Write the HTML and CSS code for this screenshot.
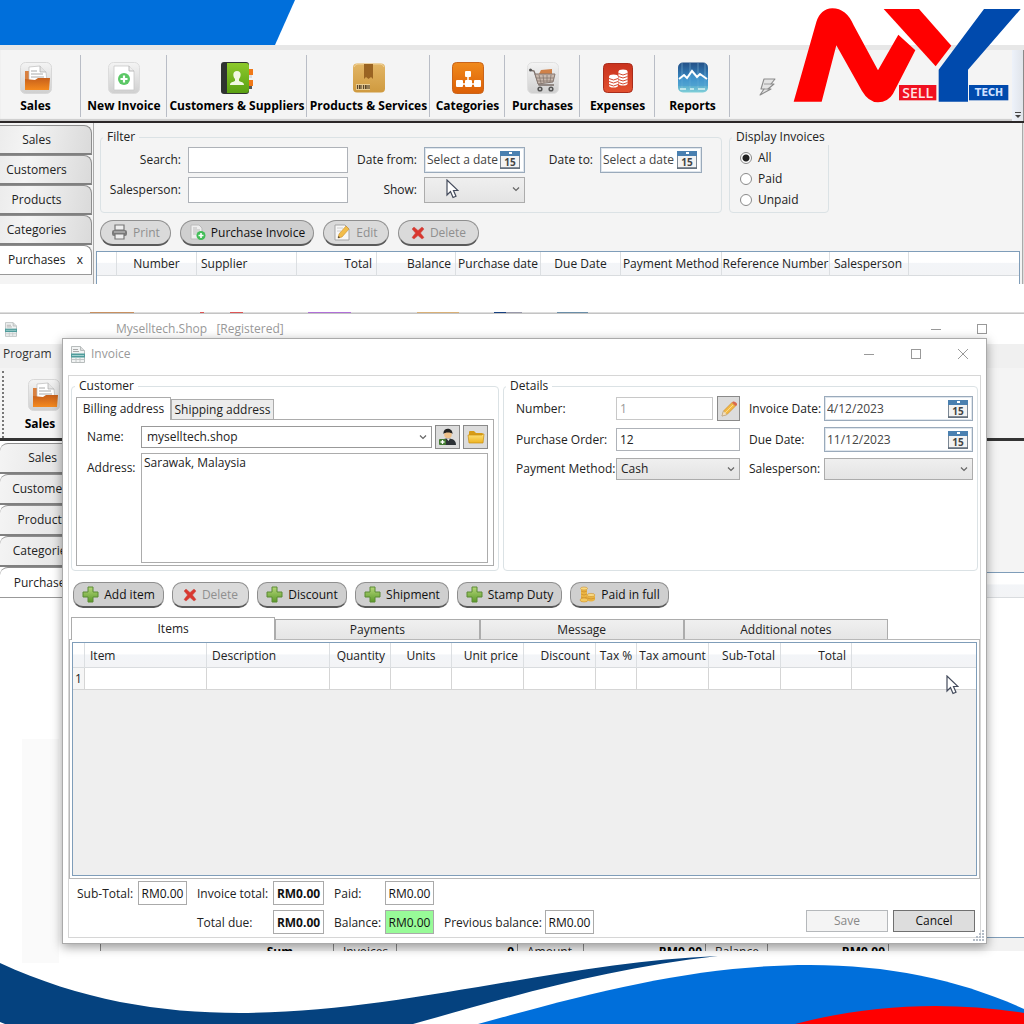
FILE: index.html
```html
<!DOCTYPE html>
<html lang="en">
<head>
<meta charset="utf-8">
<meta name="viewport" content="width=device-width, initial-scale=1">
<title>Myselltech.Shop</title>
<link rel="stylesheet" href="styles.css">
</head>
<body>
<svg class="defs" aria-hidden="true">
  <defs>
    <linearGradient id="gOrange" x1="0" y1="0" x2="0" y2="1"><stop offset="0" stop-color="#c65f1c"/><stop offset="1" stop-color="#f58a1e"/></linearGradient>
    <linearGradient id="gTile" x1="0" y1="0" x2="0" y2="1"><stop offset="0" stop-color="#f4f4f4"/><stop offset="1" stop-color="#cfcfcf"/></linearGradient>
    <linearGradient id="gGreen" x1="0" y1="0" x2="0" y2="1"><stop offset="0" stop-color="#8cc92b"/><stop offset="1" stop-color="#5aa012"/></linearGradient>
    <linearGradient id="gBox" x1="0" y1="0" x2="0" y2="1"><stop offset="0" stop-color="#e2b565"/><stop offset="1" stop-color="#cf9a3f"/></linearGradient>
    <linearGradient id="gCat" x1="0" y1="0" x2="0" y2="1"><stop offset="0" stop-color="#f08a1c"/><stop offset="1" stop-color="#dc5f06"/></linearGradient>
    <linearGradient id="gRed" x1="0" y1="0" x2="0" y2="1"><stop offset="0" stop-color="#c9321d"/><stop offset="1" stop-color="#e2502f"/></linearGradient>
    <linearGradient id="gBlue" x1="0" y1="0" x2="0" y2="1"><stop offset="0" stop-color="#235087"/><stop offset=".55" stop-color="#3689c4"/><stop offset="1" stop-color="#7fd0d8"/></linearGradient>
    <linearGradient id="gPlus" x1="0" y1="0" x2="0" y2="1"><stop offset="0" stop-color="#b5d77a"/><stop offset="1" stop-color="#5c9a2a"/></linearGradient>
    <linearGradient id="gFolder" x1="0" y1="0" x2="0" y2="1"><stop offset="0" stop-color="#ffe27a"/><stop offset="1" stop-color="#eeb422"/></linearGradient>
  </defs>
  <symbol id="i-sales" viewBox="0 0 32 32">
    <rect x=".5" y=".5" width="31" height="31" rx="5" fill="url(#gTile)" stroke="#d8d8d8"/>
    <path d="M5 9h5v14H5z" fill="#d9803f"/>
    <path d="M9 5l11-1 6 6 1 10H9z" fill="#fff" stroke="#bbb" stroke-width=".7"/>
    <path d="M20 4v6h6" fill="#e5e5e5" stroke="#aaa" stroke-width=".7"/>
    <path d="M11 9h6M11 12h12M11 15h13" stroke="#aaa" stroke-width="1"/>
    <path d="M5 17l10 1 3-2 12 0-1 12H5z" fill="url(#gOrange)"/>
  </symbol>
  <symbol id="i-new" viewBox="0 0 32 32">
    <rect x=".5" y=".5" width="31" height="31" rx="5" fill="url(#gTile)" stroke="#dcdcdc"/>
    <path d="M6 4h15l5 5v19H6z" fill="#fff" stroke="#c8c8c8" stroke-width=".8"/>
    <path d="M21 4v5h5" fill="#eee" stroke="#aaa" stroke-width=".8"/>
    <circle cx="16" cy="17" r="6" fill="#5cc866"/>
    <path d="M16 13.500v7M12.500 17h7" stroke="#fff" stroke-width="2.200"/>
  </symbol>
  <symbol id="i-book" viewBox="0 0 32 32">
    <rect x="24" y="7" width="8" height="6" fill="#f07818"/><rect x="24" y="18" width="8" height="6" fill="#f07818"/>
    <rect x="24" y="13" width="7" height="3" fill="#ddd"/><rect x="24" y="24" width="7" height="3" fill="#555"/>
    <rect x="0" y="0" width="28" height="32" rx="3" fill="#2f3330"/>
    <path d="M6 1h19q3 0 3 3v24q0 3-3 3H6z" fill="url(#gGreen)"/>
    <path d="M16 9c5 0 4 6 2 8v2c2 1 5 1 5 4H9c0-3 3-3 5-4v-2c-2-2-3-8 2-8z" fill="#f1f8e2"/>
  </symbol>
  <symbol id="i-box" viewBox="0 0 32 32">
    <rect x="0" y="1.500" width="32" height="29" rx="4" fill="url(#gBox)"/>
    <path d="M1 5q1-3 4-3h22q3 0 4 3" fill="none" stroke="#f0d39a"/>
    <path d="M11 2h9v15l-2-2-2.500 2-2.500-2-2 2z" fill="#9a6423"/>
    <rect x="3" y="22" width="14" height="6" fill="#e9cd93"/>
    <path d="M4.500 23v4M6.500 23v4M8 23v4M10.500 23v4M12.500 23v4M14 23v4M16 23v4" stroke="#59452a" stroke-width="1.200"/>
  </symbol>
  <symbol id="i-cat" viewBox="0 0 32 32">
    <rect x=".5" y=".5" width="31" height="31" rx="4" fill="url(#gCat)" stroke="#c9641a"/>
    <path d="M16 13v9M8 22h16" stroke="#fff" stroke-width="1.500"/>
    <rect x="13" y="9" width="6" height="6" rx="1" fill="#fff"/><rect x="4" y="18" width="7" height="7" rx="1" fill="#fff"/>
    <rect x="13" y="18" width="7" height="7" rx="1" fill="#fff"/><rect x="22" y="18" width="7" height="7" rx="1" fill="#fff"/>
  </symbol>
  <symbol id="i-cart" viewBox="0 0 32 32">
    <rect x=".5" y=".5" width="31" height="31" rx="5" fill="url(#gTile)" stroke="#e0e0e0"/>
    <path d="M12 12l2-4 11-1v6z" fill="#d08148"/>
    <path d="M3 8l4 1 5 14h15" fill="none" stroke="#7b6f6a" stroke-width="1.300"/>
    <path d="M8 12h20l-2 8-15 2z" fill="#c9b9ae" stroke="#857770"/>
    <path d="M12 13l2 8M16 13l1 8M20 13v7M24 13l-1 7M9 16h18M10 19h16" stroke="#857770" stroke-width=".8"/>
    <circle cx="3.500" cy="8" r="1.500" fill="#555"/>
    <circle cx="13" cy="27" r="2.600" fill="#555"/><circle cx="24" cy="27" r="2.600" fill="#555"/>
    <circle cx="13" cy="27" r="1" fill="#ddd"/><circle cx="24" cy="27" r="1" fill="#ddd"/>
  </symbol>
  <symbol id="i-exp" viewBox="0 0 32 32">
    <rect x="1.500" y="1.500" width="29" height="29" rx="4" fill="url(#gRed)" stroke="#a92c1b"/>
    <g fill="#fff"><ellipse cx="21" cy="9.500" rx="4.500" ry="2"/><rect x="16.500" y="10" width="9" height="11"/><ellipse cx="21" cy="21.500" rx="4.500" ry="2"/>
    <ellipse cx="11.500" cy="14.500" rx="4.500" ry="2"/><rect x="7" y="15" width="9" height="8"/><ellipse cx="11.500" cy="23.500" rx="4.500" ry="2"/></g>
    <path d="M16.500 11.500q4.500 3 9 0M16.500 14.500q4.500 3 9 0M16.500 17.500q4.500 3 9 0M7 16.500q4.500 3 9 0M7 19.500q4.500 3 9 0M16.500 20.500q4.500 3 9 0M7 22.500q4.500 3 9 0" fill="none" stroke="#d5492f" stroke-width="1"/>
  </symbol>
  <symbol id="i-rep" viewBox="0 0 32 32">
    <rect x="1" y=".5" width="30" height="30" rx="5" fill="url(#gBlue)"/>
    <path d="M5 1v29M13 1v29M21 1v29M28 1v29" stroke="#8fc4df" stroke-width=".7" opacity=".7"/>
    <path d="M1 17l5-4 3 3 5-7 5 6 3-3 9 6v6H1z" fill="#4a9cd2" opacity=".6"/>
    <path d="M2 17l5-4 3 3 5-7 5 6 3-3 7 5" fill="none" stroke="#fff" stroke-width="2"/>
    <path d="M3 27h6M13 27h4M21 27h7" stroke="#d7f3f2" stroke-width="1.500"/>
  </symbol>
  <symbol id="i-bolt" viewBox="0 0 17 18">
    <path d="M5 1h11l-4 5h3L9 11h3L1 17l4-6H2z" fill="#e4e4e4" stroke="#8b8b8b" stroke-width="1.100" stroke-linejoin="round"/>
    <path d="M5 6h7M5 11h4" stroke="#8b8b8b" stroke-width=".8"/>
  </symbol>
  <symbol id="i-print" viewBox="0 0 17 17">
    <path d="M4 1h9v5H4z" fill="#eee" stroke="#777" stroke-width="1.200"/>
    <rect x="1" y="6" width="15" height="6" rx="2" fill="#7b7b7b"/>
    <path d="M4 10h9v5H4z" fill="#eee" stroke="#777" stroke-width="1.200"/><path d="M3 8h11" stroke="#ccc"/>
  </symbol>
  <symbol id="i-pinv" viewBox="0 0 17 17">
    <path d="M2 1h8l3 3v11H2z" fill="#eee" stroke="#bbb"/><path d="M4 4h4M4 6h7M4 8h6M4 10h4" stroke="#bbb"/>
    <circle cx="12" cy="11.500" r="4.500" fill="#41bd57"/><path d="M12 9v5M9.500 11.500h5" stroke="#fff" stroke-width="1.600"/>
  </symbol>
  <symbol id="i-edit" viewBox="0 0 17 17">
    <path d="M1 1h10l4 4v11H1z" fill="#f7f7f7" stroke="#a5a5a5"/><path d="M3 4h6M3 7h4" stroke="#ccc"/>
    <path d="M4 14l1-4 7-8 3 3-7 8z" fill="#f2bd4a" stroke="#c98e2c" stroke-width=".6"/><path d="M4 14l.5-2 1.500 1.500z" fill="#333"/>
  </symbol>
  <symbol id="i-x" viewBox="0 0 14 14">
    <path d="M1 3l2-2 4 3.500L11 1l2 2-3.500 4L13 11.500 11 13 7 9.500 3 13l-2-1.500L4.500 7z" fill="#d9372f" stroke="#c8504a" stroke-width=".5"/>
  </symbol>
  <symbol id="i-plus" viewBox="0 0 17 17">
    <path d="M6 1h5v5h5v5h-5v5H6v-5H1V6h5z" fill="url(#gPlus)" stroke="#5b8a35" stroke-linejoin="round"/>
  </symbol>
  <symbol id="i-coins" viewBox="0 0 17 17">
    <path d="M2 2v12q3 2 6 0V2z" fill="#eab544"/><path d="M8 9v5q4 3 8 0V9z" fill="#eab544"/>
    <ellipse cx="5" cy="2.500" rx="3.500" ry="1.500" fill="#f8d984" stroke="#cf922d" stroke-width=".6"/>
    <path d="M2 5q3 2 6 0M2 8q3 2 6 0M2 11q3 2 6 0M8 12q4 2 8 0" fill="none" stroke="#cf922d" stroke-width=".8"/>
    <ellipse cx="12" cy="9" rx="4" ry="1.600" fill="#f8d984" stroke="#cf922d" stroke-width=".6"/>
    <ellipse cx="5" cy="14" rx="4" ry="2" fill="#f3c860" stroke="#cf922d" stroke-width=".6"/>
  </symbol>
  <symbol id="i-cal" viewBox="0 0 20 18">
    <rect x=".5" y=".5" width="19" height="17" fill="#f3f3f3" stroke="#7b8794"/>
    <rect x="0" y="0" width="20" height="5" fill="#4a80b0"/><rect x="9" y="1" width="3" height="2" fill="#fff"/>
    <path d="M0 17h20" stroke="#5f6b78" stroke-width="1.500"/>
  </symbol>
  <symbol id="i-chev" viewBox="0 0 8 6"><path d="M1 1.500l3 3 3-3" fill="none" stroke="#666" stroke-width="1.200"/></symbol>
  <symbol id="i-doc" viewBox="0 0 14 17">
    <path d="M.5.5h9l4 4v12H.5z" fill="#f1f3f3" stroke="#b7bcbc"/><path d="M9.500.5v4h4" fill="#ddd" stroke="#b7bcbc"/>
    <path d="M2 3.500h5M2 5.500h6" stroke="#aaa"/><path d="M1 13.500h12M5 12v4M9 12v4" stroke="#c3c8c8"/>
    <path d="M0 7.500h14v4H0z" fill="#4f9c9b"/><path d="M1 9.500h12" stroke="#b9dcdb" stroke-width=".8"/>
  </symbol>
  <symbol id="i-person" viewBox="0 0 18 18">
    <path d="M2 17c0-5 2-6.500 7-6.500s8 2 8 6.500z" fill="#2d3236"/><path d="M7.500 10.500l2 2.500 1.500-2.500z" fill="#e8e8e8"/>
    <circle cx="9" cy="6.500" r="3.800" fill="#eec08a"/><path d="M4.500 6c-1-7 9.500-7 9 0-1-2-8-2-9 0z" fill="#222"/>
    <rect x="0" y="11" width="7" height="6" rx="1" fill="#417a30"/><path d="M3.500 12v4M1.500 14h4" stroke="#fff" stroke-width="1.300"/>
  </symbol>
  <symbol id="i-folder" viewBox="0 0 18 16">
    <path d="M2 3q0-1 1-1h4l2 2h6q1 0 1 1v8H2z" fill="#d79b16"/>
    <path d="M1 6h14l1-1h1l-1 9H2z" fill="url(#gFolder)" stroke="#c98f15" stroke-width=".7"/>
  </symbol>
  <symbol id="i-pencil" viewBox="0 0 16 16">
    <path d="M1 15l1.500-5L11 1.500 14.500 5 6 13.500z" fill="#f3b944" stroke="#cb8c2d" stroke-width=".7"/>
    <path d="M11 1.500l1-1q2-.5 3.500 1.500t0 2.500l-1 .5z" fill="#d9694c"/><path d="M1 15l1.500-5 3.500 3.500z" fill="#f7e1bd" stroke="#999" stroke-width=".4"/>
    <path d="M4 12l8-8" stroke="#fbdc8b"/>
  </symbol>
  <symbol id="i-cursor" viewBox="0 0 13 20">
    <path d="M1 1v15l3.500-3.500L7 18.500l3-1.300L7.500 11.500H12z" fill="#fff" stroke="#444b5c" stroke-width="1.200"/>
  </symbol>
</svg>

<header class="banner"><div class="banner-shape"></div></header>

<section class="purchases-window">
  <nav class="toolbar" aria-label="Main">
    <button class="tool w-81"><svg><use href="#i-sales"/></svg>Sales</button>
    <button class="tool w-86"><svg><use href="#i-new"/></svg>New Invoice</button>
    <button class="tool w-140"><svg><use href="#i-book"/></svg>Customers &amp; Suppliers</button>
    <button class="tool w-123"><svg><use href="#i-box"/></svg>Products &amp; Services</button>
    <button class="tool w-75"><svg><use href="#i-cat"/></svg>Categories</button>
    <button class="tool w-75"><svg><use href="#i-cart"/></svg>Purchases</button>
    <button class="tool w-75"><svg><use href="#i-exp"/></svg>Expenses</button>
    <button class="tool w-75"><svg><use href="#i-rep"/></svg>Reports</button>
    <button class="bolt" aria-label="Quick action"><svg><use href="#i-bolt"/></svg></button>
    <button class="overflow" aria-label="More"><svg viewBox="0 0 6 6"><path d="M0 .5h6" stroke="#444"/><path d="M0 3h6L3 6z" fill="#444"/></svg></button>
  </nav>
  <div class="window-body">
    <nav class="side-tabs" aria-label="Open lists">
      <button class="side-tab">Sales</button>
      <button class="side-tab">Customers</button>
      <button class="side-tab">Products</button>
      <button class="side-tab">Categories</button>
      <button class="side-tab current">Purchases <span>x</span></button>
    </nav>
    <main class="list-pane">
      <div class="filters">
        <fieldset class="group filter">
          <legend>Filter</legend>
          <div class="filter-grid">
            <label for="search">Search:</label><input id="search" class="field" type="text">
            <label for="from">Date from:</label>
            <div class="date"><input id="from" type="text" value="Select a date"><button aria-label="Pick date"><svg viewBox="0 0 20 18"><use href="#i-cal"/><text x="10" y="15" text-anchor="middle" class="cal-day">15</text></svg></button></div>
            <label for="to">Date to:</label>
            <div class="date"><input id="to" type="text" value="Select a date"><button aria-label="Pick date"><svg viewBox="0 0 20 18"><use href="#i-cal"/><text x="10" y="15" text-anchor="middle" class="cal-day">15</text></svg></button></div>
            <label for="person">Salesperson:</label><input id="person" class="field" type="text">
            <label for="show">Show:</label>
            <div class="combo"><select id="show"><option></option></select><svg><use href="#i-chev"/></svg></div>
          </div>
        </fieldset>
        <fieldset class="group display">
          <legend>Display Invoices</legend>
          <label><input type="radio" name="display" checked>All</label>
          <label><input type="radio" name="display">Paid</label>
          <label><input type="radio" name="display">Unpaid</label>
        </fieldset>
      </div>
      <div class="actions pills">
        <button class="pill w-71" disabled><svg><use href="#i-print"/></svg>Print</button>
        <button class="pill w-134"><svg><use href="#i-pinv"/></svg>Purchase Invoice</button>
        <button class="pill w-66" disabled><svg><use href="#i-edit"/></svg>Edit</button>
        <button class="pill w-81" disabled><svg class="x"><use href="#i-x"/></svg>Delete</button>
      </div>
      <div class="purchase-list">
        <table class="grid">
          <colgroup><col class="w-20"><col class="w-80"><col class="w-100"><col class="w-80"><col class="w-79"><col class="w-85"><col class="w-80"><col class="w-101"><col class="w-108"><col class="w-79"><col></colgroup>
          <thead><tr><th></th><th class="c">Number</th><th>Supplier</th><th class="r">Total</th><th class="r">Balance</th><th class="c">Purchase date</th><th class="c">Due Date</th><th class="c">Payment Method</th><th class="c">Reference Number</th><th>Salesperson</th><th></th></tr></thead>
        </table>
      </div>
      <svg class="cursor cursor-a" aria-hidden="true"><use href="#i-cursor"/></svg>
    </main>
  </div>
</section>

<section class="shop-window">
  <div class="color-strip"></div>
  <div class="shop-title">
    <svg class="doc"><use href="#i-doc"/></svg>
    <span class="blank"></span>
    <span class="shop-name">Myselltech.Shop &nbsp; [Registered]</span>
    <svg class="win-min" viewBox="0 0 12 12"><path d="M1 6.500h10" stroke="#999"/></svg>
    <svg class="win-max" viewBox="0 0 12 12"><rect x="1.500" y="1.500" width="9" height="9" fill="none" stroke="#999"/></svg>
  </div>
  <div class="shop-menu"><a href="#program">Program</a></div>
  <div class="shop-tools"><button class="tool"><svg><use href="#i-sales"/></svg>Sales</button></div>
  <div class="shop-body">
    <nav class="side-tabs behind" aria-label="Lists">
      <button class="side-tab">Sales</button>
      <button class="side-tab">Customers</button>
      <button class="side-tab">Products</button>
      <button class="side-tab">Categories</button>
      <button class="side-tab current">Purchases</button>
    </nav>
    <div class="shop-list">
      <div class="shop-filter"></div>
      <div class="shop-head"></div>
      <div class="shop-rows"></div>
      <div class="summary"><b class="s-sum">Sum</b><span>Invoices</span><b>0</b><span>Amount</span><b>RM0.00</b><span>Balance</span><b>RM0.00</b></div>
    </div>
  </div>
  <div class="fade"></div>

  <div class="dialog" role="dialog" aria-label="Invoice">
    <div class="dialog-title">
      <svg class="doc"><use href="#i-doc"/></svg><span>Invoice</span>
      <button aria-label="Minimize"><svg viewBox="0 0 12 12"><path d="M1 6.500h10" stroke="#999"/></svg></button>
      <button aria-label="Maximize"><svg viewBox="0 0 12 12"><rect x="1.500" y="1.500" width="9" height="9" fill="none" stroke="#999"/></svg></button>
      <button aria-label="Close"><svg viewBox="0 0 12 12"><path d="M1 1l10 10M11 1L1 11" stroke="#999"/></svg></button>
    </div>
    <form class="client">
      <div class="groups">
        <fieldset class="group customer">
          <legend>Customer</legend>
          <div class="address-tabs"><button type="button" class="on">Billing address</button><button type="button">Shipping address</button></div>
          <div class="address-panel">
            <label for="name">Name:</label>
            <div class="combo light"><select id="name"><option>myselltech.shop</option></select><svg><use href="#i-chev"/></svg></div>
            <button type="button" class="icon-btn" aria-label="Add customer"><svg><use href="#i-person"/></svg></button>
            <button type="button" class="icon-btn" aria-label="Open customer"><svg><use href="#i-folder"/></svg></button>
            <label for="address" class="addr-label">Address:</label>
            <textarea id="address">Sarawak, Malaysia</textarea>
          </div>
        </fieldset>
        <fieldset class="group details">
          <legend>Details</legend>
          <div class="details-grid">
            <label for="number">Number:</label>
            <div class="number"><input id="number" class="field" value="1" disabled><button type="button" class="icon-btn" aria-label="Edit number"><svg><use href="#i-pencil"/></svg></button></div>
            <label for="idate" class="second">Invoice Date:</label>
            <div class="date"><input id="idate" type="text" value="4/12/2023"><button type="button" aria-label="Pick date"><svg viewBox="0 0 20 18"><use href="#i-cal"/><text x="10" y="15" text-anchor="middle" class="cal-day">15</text></svg></button></div>
            <label for="po">Purchase Order:</label><input id="po" class="field" type="text" value="12">
            <label for="ddate" class="second">Due Date:</label>
            <div class="date"><input id="ddate" type="text" value="11/12/2023"><button type="button" aria-label="Pick date"><svg viewBox="0 0 20 18"><use href="#i-cal"/><text x="10" y="15" text-anchor="middle" class="cal-day">15</text></svg></button></div>
            <label for="pay">Payment Method:</label>
            <div class="combo"><select id="pay"><option>Cash</option></select><svg><use href="#i-chev"/></svg></div>
            <label for="sp" class="second">Salesperson:</label>
            <div class="combo"><select id="sp"><option></option></select><svg><use href="#i-chev"/></svg></div>
          </div>
        </fieldset>
      </div>
      <div class="item-actions pills">
        <button type="button" class="pill w-91"><svg><use href="#i-plus"/></svg>Add item</button>
        <button type="button" class="pill w-77" disabled><svg class="x"><use href="#i-x"/></svg>Delete</button>
        <button type="button" class="pill w-90"><svg><use href="#i-plus"/></svg>Discount</button>
        <button type="button" class="pill w-94"><svg><use href="#i-plus"/></svg>Shipment</button>
        <button type="button" class="pill w-105"><svg><use href="#i-plus"/></svg>Stamp Duty</button>
        <button type="button" class="pill w-99"><svg><use href="#i-coins"/></svg>Paid in full</button>
      </div>
      <div class="section-tabs"><button type="button" class="on">Items</button><button type="button">Payments</button><button type="button">Message</button><button type="button">Additional notes</button></div>
      <div class="section-panel">
        <div class="items">
          <table class="grid lines">
            <colgroup><col class="w-12"><col class="w-122"><col class="w-123"><col class="w-61"><col class="w-61"><col class="w-72"><col class="w-72"><col class="w-41"><col class="w-72"><col class="w-72"><col class="w-71"><col></colgroup>
            <thead><tr><th></th><th>Item</th><th>Description</th><th class="r">Quantity</th><th class="c">Units</th><th class="r">Unit price</th><th class="r">Discount</th><th class="c">Tax %</th><th class="c">Tax amount</th><th class="r">Sub-Total</th><th class="r">Total</th><th></th></tr></thead>
            <tbody><tr><td class="row-no">1</td><td></td><td></td><td></td><td></td><td></td><td></td><td></td><td></td><td></td><td></td><td></td></tr></tbody>
          </table>
        </div>
      </div>
      <div class="bottom">
        <div class="totals">
          <label for="t1">Sub-Total:</label><input id="t1" readonly value="RM0.00">
          <label for="t2">Invoice total:</label><input id="t2" class="strong" readonly value="RM0.00">
          <label for="t3">Paid:</label><input id="t3" readonly value="RM0.00">
          <label for="t4" class="due">Total due:</label><input id="t4" class="strong" readonly value="RM0.00">
          <label for="t5">Balance:</label><input id="t5" class="ok" readonly value="RM0.00">
          <label for="t6">Previous balance:</label><input id="t6" readonly value="RM0.00">
        </div>
        <div class="commands"><button type="button" disabled>Save</button><button type="button">Cancel</button></div>
      </div>
    </form>
    <svg class="grip" viewBox="0 0 12 12" aria-hidden="true"><g fill="#b4bcc6"><path d="M9 0h2v2H9zM9 3h2v2H9zM9 6h2v2H9zM9 9h2v2H9zM6 3h2v2H6zM6 6h2v2H6zM6 9h2v2H6zM3 6h2v2H3zM3 9h2v2H3zM0 9h2v2H0z"/></g></svg>
    <svg class="cursor cursor-b" aria-hidden="true"><use href="#i-cursor"/></svg>
  </div>
</section>

<footer class="waves">
  <svg viewBox="0 951 1024 73" preserveAspectRatio="none" aria-hidden="true">
    <path d="M0 963C80 1000 160 1013 240 1013 400 1013 560 962 718 956 600 969 500 1000 413 1024H5L0 1022z" fill="#05427f"/>
    <path d="M478 1024C600 990 700 965 810 965 890 965 960 980 1024 1009v15z" fill="#006fdb"/>
    <path d="M795 1024C870 1004 950 1001 1024 1013v11z" fill="#f00"/>
  </svg>
</footer>

<svg class="logo" viewBox="430 20 687 288" role="img" aria-label="NY Sell Tech">
  <path d="M432 304H516L560 135 637 272Q657 306 685 306 715 305 730 280L797 150 746 103 685 210 612 75Q590 24 548 24 512 26 500 65z" fill="#f00"/>
  <path d="M702 26H808L905 136 858 198z" fill="#f00"/>
  <path d="M1003 26H1113L955 208V304H867V208z" fill="#004aad"/>
  <rect x="748" y="254" width="112" height="46" fill="#f01020"/><rect x="958" y="254" width="118" height="46" fill="#004aad"/>
  <text x="804" y="292" text-anchor="middle" class="logo-sell">SELL</text><text x="1018" y="287" text-anchor="middle" class="logo-tech">TECH</text>
</svg>
</body>
</html>
```
FILE: styles.css
```css
* { box-sizing: border-box; }
body {
  margin: 0; min-height: 100vh; display: flex; flex-direction: column; position: relative;
  background: #fff; color: #222; font: 12px/16px "Open Sans", "Noto Sans", sans-serif;
}
button, input, select, textarea { font: inherit; color: inherit; margin: 0; padding: 0; border-radius: 0; }
button { border: 0; background: none; white-space: nowrap; }
svg { display: block; flex: none; }
.defs { position: absolute; width: 0; height: 0; }
.cal-day { font: bold 10px "Open Sans", sans-serif; fill: #444; }

.w-12 { width: 12px; } .w-20 { width: 20px; } .w-41 { width: 41px; } .w-61 { width: 61px; } .w-66 { width: 66px; }
.w-71 { width: 71px; } .w-72 { width: 72px; } .w-75 { width: 75px; } .w-77 { width: 77px; } .w-79 { width: 79px; }
.w-80 { width: 80px; } .w-81 { width: 81px; } .w-85 { width: 85px; } .w-86 { width: 86px; } .w-90 { width: 90px; }
.w-91 { width: 91px; } .w-94 { width: 94px; } .w-99 { width: 99px; } .w-100 { width: 100px; } .w-101 { width: 101px; }
.w-105 { width: 105px; } .w-108 { width: 108px; } .w-122 { width: 122px; } .w-123 { width: 123px; }
.w-134 { width: 134px; } .w-140 { width: 140px; }

/* banner and logo */
.banner { height: 45px; flex: none; }
.banner-shape { width: 295px; height: 45px; background: #006fdb; clip-path: polygon(0 0, 100% 0, 275px 100%, 0 100%); }
.logo { position: absolute; top: 7px; right: 2px; width: 229px; height: 96px; }
.logo-sell { font: 600 42px "Open Sans", sans-serif; fill: #ffe3e3; }
.logo-tech { font: bold 29px "DejaVu Sans", sans-serif; fill: #cfe0ff; }

/* purchases window */
.purchases-window { flex: none; background: #f4f4f4; }
.toolbar {
  display: flex; height: 78px; border-top: 5px solid #e7e7e7; border-bottom: 2px solid #2b2728;
  box-shadow: inset 0 -2px 1px #ccc;
}
.tool {
  flex: none; display: flex; flex-direction: column; align-items: center; gap: 4px;
  padding: 8px 10px 0; font-weight: 700; color: #000;
}
.tool svg { width: 32px; height: 32px; }
.toolbar .tool { padding: 12px 0 0; background: linear-gradient(#b9bdc6, #b9bdc6) right 5px / 1px 62px no-repeat; }
.toolbar .tool:first-child { padding-right: 10px; }
.bolt { width: 75px; padding-top: 2px; }
.bolt svg { width: 17px; height: 18px; margin: 0 auto; }
.overflow { margin-left: auto; width: 12px; background: linear-gradient(90deg, #edf2fa, #e0e4ea); border-right: 1px solid #8a8a8a; display: flex; align-items: flex-end; justify-content: center; padding-bottom: 3px; }
.overflow svg { width: 6px; height: 6px; }
.window-body { display: flex; border-right: 1px solid #ddd; background: #f4f4f4; }
.side-tabs { width: 93px; flex: none; padding-top: 2px; background: #f4f4f4; }
.side-tab {
  display: block; width: 92px; height: 30px; padding-right: 18px; border: 1px solid #8d8d8d; border-width: 1px 1px 2px 0;
  border-bottom-color: #808080; border-radius: 0 8px 0 0; background: linear-gradient(100deg, #ececec, #f4f4f4 30%, #dadada);
}
.side-tab.current { background: #fff; border-bottom: 1px solid #999; padding: 0; }
.side-tab span { margin-left: 8px; }
.list-pane { flex: 1; min-width: 0; position: relative; padding: 6px 2px 0; border-left: 1px solid #aaa; border-right: 1px solid #aaa; }
.filters { display: flex; gap: 7px; padding-left: 4px; }
.group { margin: 0; padding: 2px 6px 9px; border: 1px solid #dbe2e5; border-radius: 4px; min-width: 0; }
.group legend { padding: 0 4px; margin-left: -4px; height: 16px; white-space: nowrap; }
.filter { width: 622px; }
.filter-grid { display: grid; grid-template-columns: 74px 160px 62px 101px 61px 102px; column-gap: 7px; row-gap: 4px; grid-auto-rows: 26px; align-items: center; }
.filter-grid label { text-align: right; white-space: nowrap; }
.field { width: 100%; height: 100%; border: 1px solid #aeb2b8; background: #fff; padding: 0 3px; min-width: 0; }
.date { display: flex; align-items: center; height: 26px; padding: 0 4px 0 2px; border: 1px solid #9aaabb; background: #fff; box-shadow: inset 0 0 0 1px #dfe6ed; }
.date input { flex: 1; min-width: 0; border: 0; background: none; color: #444; outline: 0; }
.date svg { width: 20px; height: 18px; }
.combo { position: relative; height: 26px; }
.combo select { width: 100%; height: 100%; appearance: none; border: 1px solid #acacac; background: linear-gradient(#efefef, #e4e4e4); padding: 0 16px 0 4px; }
.combo.light select { background: #fff; border-color: #999; padding-left: 5px; }
.combo svg { position: absolute; right: 5px; top: 9px; width: 8px; height: 6px; pointer-events: none; }
.display { width: 100px; padding-bottom: 2px; }
.display label { display: flex; align-items: center; gap: 6px; height: 21px; padding-left: 4px; }
.display input { appearance: none; width: 12px; height: 12px; border: 1px solid #8a8a8a; border-radius: 50%; background: #fff; }
.display input:checked { background: radial-gradient(circle, #222 0 3px, #fff 4px); }
.pills { display: flex; }
.actions { gap: 9px; margin: 7px 0 5px 4px; }
.pill {
  flex: none; height: 26px; display: flex; align-items: center; justify-content: center; gap: 5px;
  border: 1px solid #8f8f8f; border-bottom: 2px solid #5a5a5a; border-radius: 13px; background: #cfcfcf; color: #111;
}
.pill:disabled { background: #dadada; color: #8f8f8f; }
.pill svg { width: 17px; height: 17px; }
.pill svg.x { width: 14px; height: 14px; }
.purchase-list { height: 33px; border: 1px solid #7f9db9; border-bottom: 0; background: #fff; }
.grid { width: 100%; border-collapse: separate; border-spacing: 0; table-layout: fixed; color: #222; }
.grid th { height: 24px; padding: 0 4px; text-align: left; font-weight: 400; white-space: nowrap; border-right: 1px solid #dcdfe2; border-bottom: 1px solid #d9dcdf; background: linear-gradient(#fff 45%, #f3f5f8 50%, #f3f4f6); }
.grid th:last-child, .grid td:last-child { border-right: 0; }
.grid .c { text-align: center; padding: 0; }
.grid .r { text-align: right; }
.cursor { position: absolute; width: 13px; height: 20px; }
.cursor-a { left: 352px; top: 56px; }

/* shop window behind the dialog */
.shop-window { flex: 1 0 auto; margin-top: 27px; position: relative; display: flex; flex-direction: column; }
.color-strip { height: 3px; border-bottom: 1px solid #c4c4c4; border-top: 1px solid #fff;
  background: linear-gradient(90deg, #ddd 0 90px, #c89060 90px 134px, #ddd 134px 200px, #d55 200px 204px, #ddd 204px 230px, #d55 230px 243px, #ddd 243px 308px, #b06fd8 308px 351px, #ddd 351px 417px, #d9b077 417px 459px, #ddd 459px 494px, #164080 494px 506px, #99a 506px 522px, #ddd 522px 557px, #6a8ea8 557px 588px, #ddd 588px); }
.shop-title { height: 30px; display: flex; align-items: center; padding: 0 36px 0 5px; color: #999; background: #fff; }
.doc { width: 14px; height: 17px; }
.shop-title .doc { width: 12px; }
.blank { width: 99px; }
.win-min, .win-max { width: 12px; height: 12px; }
.win-min { margin-left: auto; margin-right: 34px; }
.shop-menu { height: 24px; padding: 2px 3px; background: #f0f0f0; }
.shop-menu a { color: #333; text-decoration: none; }
.shop-tools { height: 73px; padding: 3px 0 0 2px; background: #f4f4f4; border-bottom: 3px solid #333; display: flex; }
.shop-tools .tool { gap: 5px; width: 74px; border-left: 2px dotted #777; }
.shop-tools .tool svg { margin-left: 8px; }
.shop-body { flex: 1; display: flex; }
.behind { width: 100px; background: #fff; }
.behind .side-tab { width: 100px; height: 31px; padding: 0 14px 0 0; border-radius: 8px 0 0 0; background: linear-gradient(100deg, #f4f4f4, #dcdcdc); }
.behind .side-tab.current { background: #fff; }
.shop-list { flex: 1; display: flex; flex-direction: column; min-width: 0; }
.shop-filter { height: 132px; background: #f4f4f4; border-bottom: 1px solid #7f9db9; }
.shop-head { height: 25px; background: linear-gradient(#fff 45%, #f3f5f8 50%, #f3f4f6); border-bottom: 1px solid #d9dcdf; }
.shop-rows { flex: 1; border-bottom: 1px solid #7f9db9; }
.summary { height: 13px; background: #f2f2f2; overflow: hidden; display: grid; grid-template-columns: 234px 63px 121px 66px 122px 62px 121px 1fr; line-height: 28px; }
.summary > * { border-right: 1px solid #888; padding: 0 3px 0 9px; height: 28px; }
.summary b { text-align: right; color: #000; }
.summary .s-sum { border-left: 1px solid #888; padding-right: 40px; }
.fade { position: absolute; left: 22px; top: 428px; bottom: -12px; width: 37px; background: #fafafa; }

/* invoice dialog */
.dialog {
  position: absolute; left: 62px; right: 37px; top: 27px; bottom: 7px; display: flex; flex-direction: column;
  padding: 0 5px 5px; border: 1px solid #aaa; background: #fff; box-shadow: 0 3px 10px rgba(0, 0, 0, .38);
}
.dialog-title { height: 36px; display: flex; align-items: center; gap: 6px; padding: 0 12px 6px 3px; color: #999; }
.dialog-title span { margin-right: auto; }
.dialog-title button { width: 12px; height: 12px; margin-left: 29px; }
.dialog-title button svg { width: 12px; height: 12px; }
.client { flex: 1; display: flex; flex-direction: column; border: 1px solid #d6d6d6; }
.groups { display: grid; grid-template-columns: 428fr 475fr; gap: 4px; padding: 2px 2px 0; }
.customer { padding: 3px 4px 4px; }
.customer legend { margin-left: -1px; }
.address-tabs { display: flex; align-items: flex-end; height: 22px; }
.address-tabs button { height: 20px; width: 103px; border: 1px solid #acacac; border-bottom: 0; background: #ececec; }
.address-tabs .on { height: 23px; width: 95px; margin-bottom: -1px; background: #fff; z-index: 1; }
.address-panel { display: grid; grid-template-columns: 51px 1fr 25px 25px; grid-template-rows: 24px 110px; gap: 4px 3px; padding: 5px 5px 2px 10px; border: 1px solid #acacac; align-items: center; }
.address-panel .combo { height: 22px; }
.combo.light svg { top: 8px; }
.addr-label { align-self: start; padding-top: 7px; }
.address-panel textarea { grid-column: 2 / -1; height: 110px; resize: none; border: 1px solid #acacac; padding: 1px 2px; background: #fff; }
.icon-btn { width: 25px; height: 24px; display: grid; place-items: center; border: 1px solid #8a8a8a; background: #dcdcdc; }
.icon-btn svg { width: 18px; height: 18px; }
.details { padding: 2px 4px 0 12px; }
.details legend { margin-left: -10px; }
.details-grid { display: grid; grid-template-columns: 97px minmax(0, 124fr) 78px minmax(0, 149fr); column-gap: 3px; row-gap: 6px; align-items: center; white-space: nowrap; }
.details-grid .field { height: 23px; }
.details-grid .date { height: 25px; }
.details-grid .combo { height: 22px; }
.details-grid .combo svg { top: 8px; }
.second { padding-left: 6px; }
.number { display: flex; gap: 4px; align-items: center; min-width: 0; }
.number .icon-btn { width: 23px; height: 25px; flex: none; }
.number svg { width: 16px; height: 16px; }
.field:disabled { color: #999; border-color: #c8c8c8; }
.item-actions { gap: 8px; padding: 11px 4px 9px; }
.item-actions .pill { border-radius: 10px; }
.section-tabs { display: flex; align-items: flex-end; height: 22px; padding: 0 92px 0 2px; }
.section-tabs button { flex: 1; height: 20px; border: 1px solid #acacac; border-bottom: 0; background: linear-gradient(#f0f0f0, #e5e5e5); }
.section-tabs .on { height: 23px; margin-bottom: -1px; background: #fff; z-index: 1; }
.section-panel { flex: 1; display: flex; border: 1px solid #b8b8b8; padding: 2px; }
.items { flex: 1; border: 1px solid #7f9db9; background: #efefef; }
.lines th { padding: 2px 5px 0; height: 25px; }
.lines .c { padding: 2px 0 0; }
.lines td { height: 22px; padding: 0; background: #fff; border-right: 1px solid #d5d5d5; border-bottom: 1px solid #d5d5d5; }
.lines .row-no { text-align: center; background: #f6f6f6; }
.bottom { display: flex; justify-content: space-between; align-items: flex-end; padding: 2px 5px 3px 8px; }
.totals { display: grid; grid-template-columns: 61px 49px 86px 51px 61px 49px 111px 49px; gap: 5px 0; align-items: center; white-space: nowrap; }
.totals label { padding-left: 10px; padding-top: 2px; }
.totals label:first-child { padding-left: 0; }
.totals .due { grid-column: 3; }
.totals input { width: 100%; height: 24px; border: 1px solid #aaa; background: #fff; text-align: center; color: #111; }
.totals .strong { font-weight: 700; }
.totals .ok { background: #98fb98; }
.commands { display: flex; gap: 5px; margin-bottom: 2px; }
.commands button { width: 82px; height: 22px; border: 1px solid #707070; background: #ddd; color: #111; }
.commands button:disabled { border-color: #b5b8bb; background: #f4f4f4; color: #888; }
.grip { position: absolute; right: 1px; bottom: 1px; width: 12px; height: 12px; }
.cursor-b { right: 27px; top: 336px; }

.waves { flex: none; height: 73px; }
.waves svg { width: 100%; height: 73px; position: relative; }
```
